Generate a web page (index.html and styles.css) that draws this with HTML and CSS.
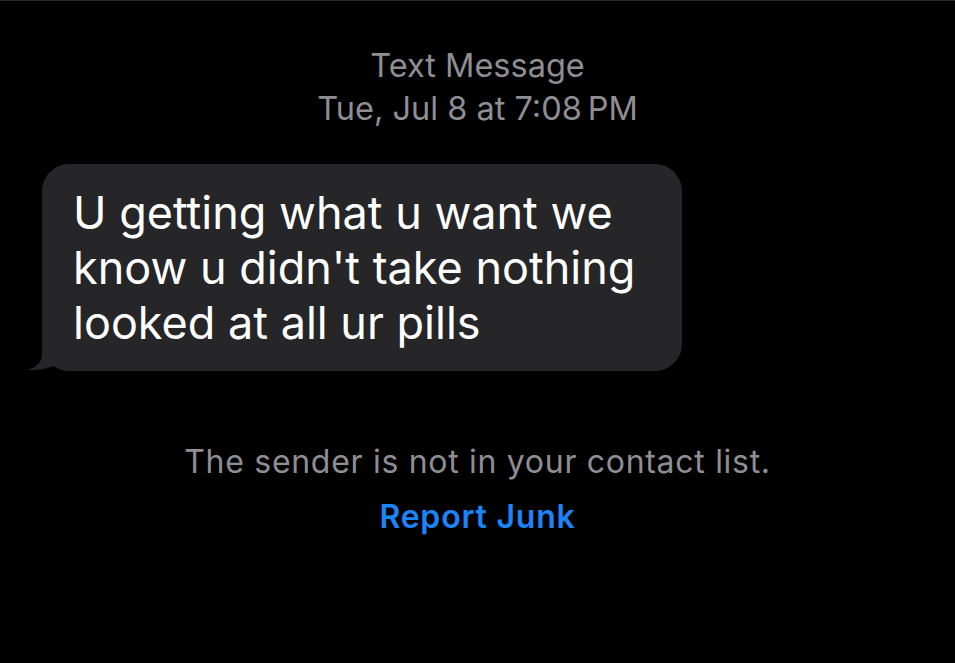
FILE: index.html
```html
<!DOCTYPE html>
<html lang="en">
<head>
<meta charset="UTF-8" />
<meta name="viewport" content="width=device-width, initial-scale=1" />
<title>Messages</title>
<link rel="stylesheet" href="styles.css">
</head>
<body>

<div class="topline"></div>

<main class="thread">
  <div class="stamp">
    <div class="stamp-title">Text Message</div>
    <div class="stamp-time">Tue, Jul 8 at 7:08&#8239;PM</div>
  </div>

  <div class="row">
    <div class="bubble">
      U getting what u want we<br>know u didn't take nothing<br>looked at all ur pills
      <svg class="tail" width="50" height="45" viewBox="0 0 50 45">
        <path d="M16 0 L16 28 C16 36 10 42 1 44 C10 45 20 42.5 29 40 L29 0 Z" fill="#262629"/>
      </svg>
    </div>
  </div>

  <div class="notice">
    <p>The sender is not in your contact list.</p>
    <a href="#" class="junk">Report Junk</a>
  </div>
</main>

</body>
</html>
```

FILE: styles.css
```css
body {
  margin: 0;
  background: #000;
  font-family: Inter, 'Noto Sans', sans-serif;
  color: #fff;
}
.topline {
  height: 1px;
  background: #2a2a2c;
}
.thread {
  padding-top: 43px;
}
.stamp {
  text-align: center;
  color: #8e8e93;
  font-size: 32.5px;
  line-height: 43px;
}
.row {
  padding: 34px 0 0 42px;
}
.bubble {
  position: relative;
  width: 640px;
  box-sizing: border-box;
  padding: 21px 20px 21px 31px;
  background: #262629;
  border-radius: 27px;
  font-size: 45px;
  line-height: 55px;
}
.tail {
  position: absolute;
  left: -16px;
  bottom: 0;
}
.notice {
  margin-top: 63px;
  text-align: center;
}
.notice p {
  margin: 0;
  color: #8e8e93;
  font-size: 32px;
  letter-spacing: 0.7px;
  line-height: 55px;
}
.junk {
  color: #1a84f8;
  font-size: 32px;
  font-weight: 600;
  letter-spacing: 0.8px;
  line-height: 55px;
  text-decoration: none;
}
```
